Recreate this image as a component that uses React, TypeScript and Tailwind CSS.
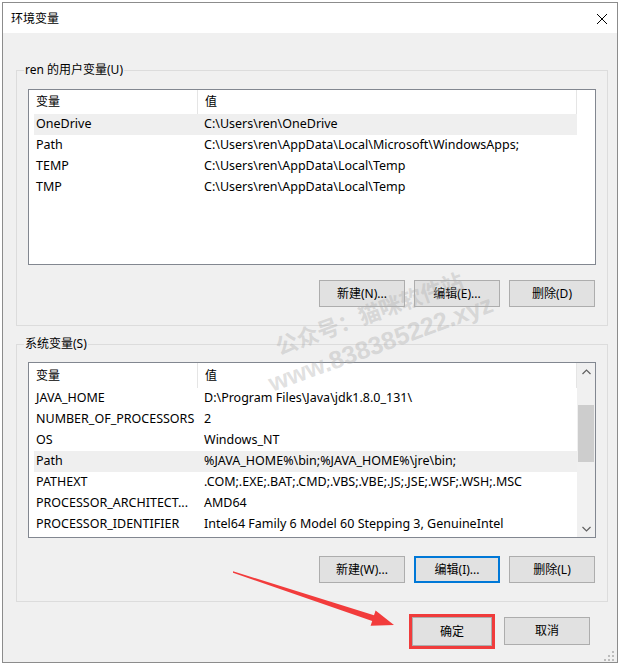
import React from 'react';

const userVars = [
  ['OneDrive', 'C:\\Users\\ren\\OneDrive'],
  ['Path', 'C:\\Users\\ren\\AppData\\Local\\Microsoft\\WindowsApps;'],
  ['TEMP', 'C:\\Users\\ren\\AppData\\Local\\Temp'],
  ['TMP', 'C:\\Users\\ren\\AppData\\Local\\Temp'],
];

const sysVars = [
  ['JAVA_HOME', 'D:\\Program Files\\Java\\jdk1.8.0_131\\'],
  ['NUMBER_OF_PROCESSORS', '2'],
  ['OS', 'Windows_NT'],
  ['Path', '%JAVA_HOME%\\bin;%JAVA_HOME%\\jre\\bin;'],
  ['PATHEXT', '.COM;.EXE;.BAT;.CMD;.VBS;.VBE;.JS;.JSE;.WSF;.WSH;.MSC'],
  ['PROCESSOR_ARCHITECT...', 'AMD64'],
  ['PROCESSOR_IDENTIFIER', 'Intel64 Family 6 Model 60 Stepping 3, GenuineIntel'],
];

type ListProps = {
  rows: string[][];
  selected: number;
  headerH: string;
  scroll?: boolean;
};

// 변수 목록 (listview)
const VarList = ({ rows, selected, headerH, scroll }: ListProps) => (
  <div className="flex h-[176px] w-[568px] border border-[#828790] bg-white">
    <div className="w-[548px] pl-[5px] overflow-hidden">
      <div className={`flex ${headerH} w-[543px] items-center border-r border-[#e5e5e5]`}>
        <div className="w-[164px] h-full flex items-center pl-[2px] border-r border-[#e5e5e5]">变量</div>
        <div className="pl-[7px]">值</div>
      </div>
      {rows.map((r, i) => (
        <div
          key={i}
          className={`flex h-[21px] w-[543px] items-center whitespace-nowrap text-[12.5px] ${i === selected ? 'bg-[#efefef]' : ''}`}
        >
          <div className="w-[164px] pl-[2px] overflow-hidden">{r[0]}</div>
          <div className="pl-[6px]">{r[1]}</div>
        </div>
      ))}
    </div>
    {scroll ? (
      <div className="flex w-[18px] flex-col bg-[#f0f0f0]">
        <div className="flex h-[17px] items-center justify-center">
          <svg width="9" height="6" viewBox="0 0 9 6">
            <path d="M0.5 5 L4.5 1 L8.5 5" fill="none" stroke="#606060" strokeWidth="1.2" />
          </svg>
        </div>
        <div className="flex-1 px-[1px]">
          <div className="mt-[25px] h-[57px] bg-[#cdcdcd]" />
        </div>
        <div className="flex h-[17px] items-center justify-center">
          <svg width="9" height="6" viewBox="0 0 9 6">
            <path d="M0.5 1 L4.5 5 L8.5 1" fill="none" stroke="#606060" strokeWidth="1.2" />
          </svg>
        </div>
      </div>
    ) : (
      <div className="w-[18px]" />
    )}
  </div>
);

const Btn = ({ label, focus, w = 'w-[86px]', extra = '' }: { label: string; focus?: boolean; w?: string; extra?: string }) => (
  <button
    className={`${w} h-[27px] bg-[#e1e1e1] text-[12px] text-black ${
      focus ? 'border-2 border-[#0078d7]' : 'border border-[#adadad]'
    } ${extra}`}
  >
    {label}
  </button>
);

const Group = ({ title, children }: { title: string; children: React.ReactNode }) => (
  <fieldset className="ml-[13px] w-[591px] border border-[#dcdcdc] pl-[11px] pr-[11px]">
    <legend className="ml-[-4px] px-[1px] leading-[16px]">{title}</legend>
    {children}
  </fieldset>
);

export default function App() {
  return (
    <div className="relative h-[665px] w-[622px] overflow-hidden bg-white text-[12px] text-black font-['Noto_Sans','Noto_Sans_CJK_SC',sans-serif]">
      <div className="ml-[2px] mt-[2px] flex h-[661px] w-[616px] flex-col border border-[#8c8c8c] bg-[#f0f0f0]">
        {/* 타이틀 바 */}
        <div className="flex h-[30px] items-center justify-between bg-white pl-[8px] pr-[8px]">
          <span className="text-[12px] mt-[1px]">环境变量</span>
          <svg width="12" height="12" viewBox="0 0 12 12" className="mr-[1px] mt-[2px]">
            <path d="M1 1 L11 11 M11 1 L1 11" stroke="#000" strokeWidth="1" />
          </svg>
        </div>

        {/* 사용자 변수 */}
        <div className="mt-[29px]">
          <Group title="ren 的用户变量(U)">
            <div className="mt-[11px]">
              <VarList rows={userVars} selected={0} headerH="h-[24px]" />
            </div>
            <div className="mt-[15px] mb-[18px] flex justify-end gap-[9px] pr-[1px]">
              <Btn label="新建(N)..." />
              <Btn label="编辑(E)..." />
              <Btn label="删除(D)" />
            </div>
          </Group>
        </div>

        {/* 시스템 변수 */}
        <div className="mt-[10px]">
          <Group title="系统变量(S)">
            <div className="mt-[10px]">
              <VarList rows={sysVars} selected={3} headerH="h-[25px]" scroll />
            </div>
            <div className="mt-[18px] mb-[18px] flex justify-end gap-[9px] pr-[1px]">
              <Btn label="新建(W)..." />
              <Btn label="编辑(I)..." focus />
              <Btn label="删除(L)" />
            </div>
          </Group>
        </div>

        {/* 확인 / 취소 */}
        <div className="mt-[15px] flex justify-end gap-[12px] pr-[27px]">
          <Btn label="确定" w="w-[80px]" extra="h-[29px] outline-solid outline-[3px] outline-[#f03c3c]" />
          <Btn label="取消" w="w-[86px]" extra="h-[28px]" />
        </div>
      </div>

      {/* 워터마크 */}
      <div className="pointer-events-none absolute left-[257px] top-[299px] w-[236px] rotate-[-20deg] text-center font-bold leading-[30px] text-[rgba(175,175,175,0.4)] font-['Liberation_Sans','Noto_Sans_CJK_SC',sans-serif]">
        <div className="text-[22px]">公众号：猫咪软件站</div>
        <div className="text-[25px]">www.838385222.xyz</div>
      </div>

      {/* 빨간 화살표 */}
      <svg className="pointer-events-none absolute left-0 top-0" width="622" height="665" viewBox="0 0 622 665">
        <polygon
          points="233,571.3 374,615.3 375.6,610.5 394,625 370.6,625.7 372.2,620.9 233,572.7"
          fill="#f23c3c"
        />
      </svg>

      {/* 크기 조절 그립 */}
      <svg className="absolute left-[604px] top-[651px]" width="11" height="11" viewBox="0 0 11 11">
        <rect x="8" y="0" width="2" height="2" fill="#bcbcbc" />
        <rect x="4" y="4" width="2" height="2" fill="#bcbcbc" />
        <rect x="8" y="4" width="2" height="2" fill="#bcbcbc" />
        <rect x="0" y="8" width="2" height="2" fill="#bcbcbc" />
        <rect x="4" y="8" width="2" height="2" fill="#bcbcbc" />
        <rect x="8" y="8" width="2" height="2" fill="#bcbcbc" />
      </svg>
    </div>
  );
}
